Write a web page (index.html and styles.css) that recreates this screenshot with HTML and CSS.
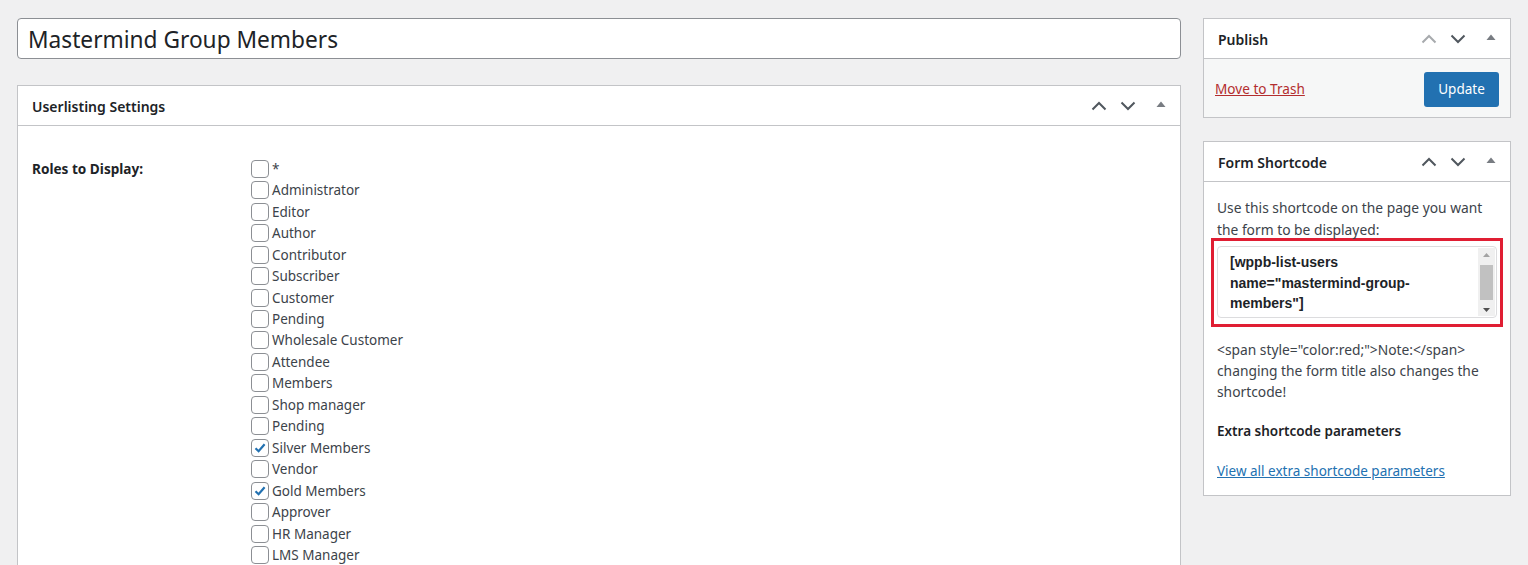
FILE: index.html
```html
<!DOCTYPE html>
<html>
<head>
<meta charset="utf-8">
<link rel="stylesheet" href="styles.css">
</head>
<body>
<div class="wrap">
  <div class="main">
    <div class="titlebox"><span class="title-text">Mastermind Group Members</span></div>
    <div class="postbox">
      <div class="pb-head">
        <h2>Userlisting Settings</h2>
        <div class="handles">
          <svg class="chev" width="16" height="10" viewBox="0 0 16 10"><path d="M1.5 8.5 L8 2 L14.5 8.5" fill="none" stroke="currentColor" stroke-width="2"/></svg>
          <svg class="chev" width="16" height="10" viewBox="0 0 16 10"><path d="M1.5 1.5 L8 8 L14.5 1.5" fill="none" stroke="currentColor" stroke-width="2"/></svg>
          <svg class="tri" width="10" height="6" viewBox="0 0 10 6"><path d="M0.5 6 L5 0.5 L9.5 6 Z" fill="currentColor"/></svg>
        </div>
      </div>
      <div class="pb-body settings">
        <div class="label">Roles to Display:</div>
        <div class="roles">
          <label class="role"><span class="cb"></span>*</label>
          <label class="role"><span class="cb"></span>Administrator</label>
          <label class="role"><span class="cb"></span>Editor</label>
          <label class="role"><span class="cb"></span>Author</label>
          <label class="role"><span class="cb"></span>Contributor</label>
          <label class="role"><span class="cb"></span>Subscriber</label>
          <label class="role"><span class="cb"></span>Customer</label>
          <label class="role"><span class="cb"></span>Pending</label>
          <label class="role"><span class="cb"></span>Wholesale Customer</label>
          <label class="role"><span class="cb"></span>Attendee</label>
          <label class="role"><span class="cb"></span>Members</label>
          <label class="role"><span class="cb"></span>Shop manager</label>
          <label class="role"><span class="cb"></span>Pending</label>
          <label class="role"><span class="cb checked"><svg width="16" height="16" viewBox="0 0 16 16"><path d="M3.5 8.2 L6.6 11.2 L12.6 4.2" fill="none" stroke="#2271b1" stroke-width="2.2"/></svg></span>Silver Members</label>
          <label class="role"><span class="cb"></span>Vendor</label>
          <label class="role"><span class="cb checked"><svg width="16" height="16" viewBox="0 0 16 16"><path d="M3.5 8.2 L6.6 11.2 L12.6 4.2" fill="none" stroke="#2271b1" stroke-width="2.2"/></svg></span>Gold Members</label>
          <label class="role"><span class="cb"></span>Approver</label>
          <label class="role"><span class="cb"></span>HR Manager</label>
          <label class="role"><span class="cb"></span>LMS Manager</label>
        </div>
      </div>
    </div>
  </div>
  <div class="side">
    <div class="postbox">
      <div class="pb-head">
        <h2>Publish</h2>
        <div class="handles">
          <svg class="chev disabled" width="16" height="10" viewBox="0 0 16 10"><path d="M1.5 8.5 L8 2 L14.5 8.5" fill="none" stroke="currentColor" stroke-width="2"/></svg>
          <svg class="chev" width="16" height="10" viewBox="0 0 16 10"><path d="M1.5 1.5 L8 8 L14.5 1.5" fill="none" stroke="currentColor" stroke-width="2"/></svg>
          <svg class="tri" width="10" height="6" viewBox="0 0 10 6"><path d="M0.5 6 L5 0.5 L9.5 6 Z" fill="currentColor"/></svg>
        </div>
      </div>
      <div class="publish-actions">
        <a class="trash" href="#">Move to Trash</a>
        <span class="btn-primary">Update</span>
      </div>
    </div>
    <div class="postbox">
      <div class="pb-head">
        <h2>Form Shortcode</h2>
        <div class="handles">
          <svg class="chev" width="16" height="10" viewBox="0 0 16 10"><path d="M1.5 8.5 L8 2 L14.5 8.5" fill="none" stroke="currentColor" stroke-width="2"/></svg>
          <svg class="chev" width="16" height="10" viewBox="0 0 16 10"><path d="M1.5 1.5 L8 8 L14.5 1.5" fill="none" stroke="currentColor" stroke-width="2"/></svg>
          <svg class="tri" width="10" height="6" viewBox="0 0 10 6"><path d="M0.5 6 L5 0.5 L9.5 6 Z" fill="currentColor"/></svg>
        </div>
      </div>
      <div class="pb-body shortcode">
        <p class="intro">Use this shortcode on the page you want the form to be displayed:</p>
        <div class="highlight">
          <div class="codebox">
            <div class="code">[wppb-list-users name="mastermind-group-members"]</div>
            <div class="scrollbar">
              <svg width="7" height="4" viewBox="0 0 7 4"><path d="M0 4 L3.5 0 L7 4 Z" fill="#a3a3a3"/></svg>
              <span class="thumb"></span>
              <svg width="7" height="4" viewBox="0 0 7 4"><path d="M0 0 L3.5 4 L7 0 Z" fill="#505050"/></svg>
            </div>
          </div>
        </div>
        <p class="note">&lt;span style="color:red;"&gt;Note:&lt;/span&gt; changing the form title also changes the shortcode!</p>
        <p class="extra">Extra shortcode parameters</p>
        <a class="link" href="#">View all extra shortcode parameters</a>
      </div>
    </div>
  </div>
</div>
</body>
</html>
```
FILE: styles.css
```css
* { box-sizing: border-box; }
html, body { margin: 0; padding: 0; }
body {
  background: #f0f0f1;
  font-family: "Noto Sans", "Open Sans", sans-serif;
  font-size: 13px;
  color: #3c434a;
  height: 565px;
  overflow: hidden;
}
.wrap {
  display: flex;
  gap: 22px;
  padding: 18px 17px 0 17px;
}
.main { width: 1164px; display: flex; flex-direction: column; gap: 26px; }
.side { width: 308px; display: flex; flex-direction: column; gap: 23px; }

.titlebox {
  height: 41px;
  border: 1px solid #8c8f94;
  border-radius: 4px;
  background: #fff;
  display: flex;
  align-items: center;
  padding: 0 10px;
}
.title-text {
  font-size: 22.7px;
  color: #1d2327;
  line-height: 1;
  margin-top: 4px;
}

.postbox {
  background: #fff;
  border: 1px solid #c3c4c7;
}
.pb-head {
  height: 40px;
  border-bottom: 1px solid #c3c4c7;
  display: flex;
  align-items: center;
  justify-content: space-between;
  padding: 0 14px 0 14px;
}
.pb-head h2 {
  margin: 2px 0 0 0;
  font-size: 14px;
  font-weight: 600;
  color: #1d2327;
}
.handles {
  display: flex;
  align-items: center;
  color: #50575e;
}
.handles .chev { margin-left: 13px; display: block; }
.handles .chev.disabled { color: #a7aaad; }
.handles .tri { margin-left: 20px; color: #787c82; display: block; margin-top: -3px; }

.settings {
  display: flex;
  padding: 32px 14px 0 14px;
  height: 440px;
}
.settings .label {
  width: 219px;
  font-weight: 700;
  font-size: 13.6px;
  color: #1d2327;
  padding-top: 1px;
}
.roles { display: flex; flex-direction: column; }
.role {
  display: flex;
  align-items: center;
  height: 21.5px;
  font-size: 13.5px;
  color: #3c434a;
  white-space: nowrap;
}
.cb {
  width: 18px;
  height: 18px;
  border: 1px solid #8c8f94;
  border-radius: 4px;
  background: #fff;
  margin-right: 3px;
  display: flex;
  align-items: center;
  justify-content: center;
}

.publish-actions {
  background: #f6f7f7;
  height: 58px;
  display: flex;
  align-items: center;
  justify-content: space-between;
  padding: 2px 11px 0 11px;
}
.trash {
  color: #b32d2e;
  text-decoration: underline;
  font-size: 13.6px;
  margin-top: -2px;
}
.btn-primary {
  background: #2271b1;
  color: #fff;
  border-radius: 3px;
  height: 35px;
  width: 75px;
  display: flex;
  align-items: center;
  justify-content: center;
  font-size: 13.5px;
}

.shortcode { padding: 15px 13px 13px 13px; font-size: 13.8px; }
.shortcode p { margin: 0; line-height: 21px; }
.intro { color: #3c434a; line-height: 22px !important; }
.highlight {
  border: 3px solid #e01e33;
  margin: -3px -6px 0 -6px;
  padding: 5px 3px 6px 3px;
}
.codebox {
  border: 1px solid #dcdcde;
  border-radius: 4px;
  height: 72px;
  display: flex;
  justify-content: space-between;
  background: #fff;
}
.code {
  font-family: "Liberation Sans", Arial, sans-serif;
  font-weight: 700;
  font-size: 14px;
  color: #1d2327;
  line-height: 20.5px;
  padding: 5px 0 0 12px;
  width: 240px;
}
.scrollbar {
  width: 17px;
  background: #f0f0f0;
  display: flex;
  flex-direction: column;
  align-items: center;
  justify-content: space-between;
  padding: 5px 0 4px 0;
  margin: 1px 1px 1px 0;
}
.scrollbar .thumb {
  width: 13px;
  height: 35px;
  background: #c1c1c1;
  flex: none;
}
.note { margin-top: 12px !important; color: #3c434a; }
.extra { margin-top: 19px !important; font-weight: 600; color: #1d2327; font-size: 13.5px; }
.link {
  display: inline-block;
  margin-top: 19px;
  line-height: 21px;
  font-size: 13.5px;
  color: #2271b1;
  text-decoration: underline;
}
```
